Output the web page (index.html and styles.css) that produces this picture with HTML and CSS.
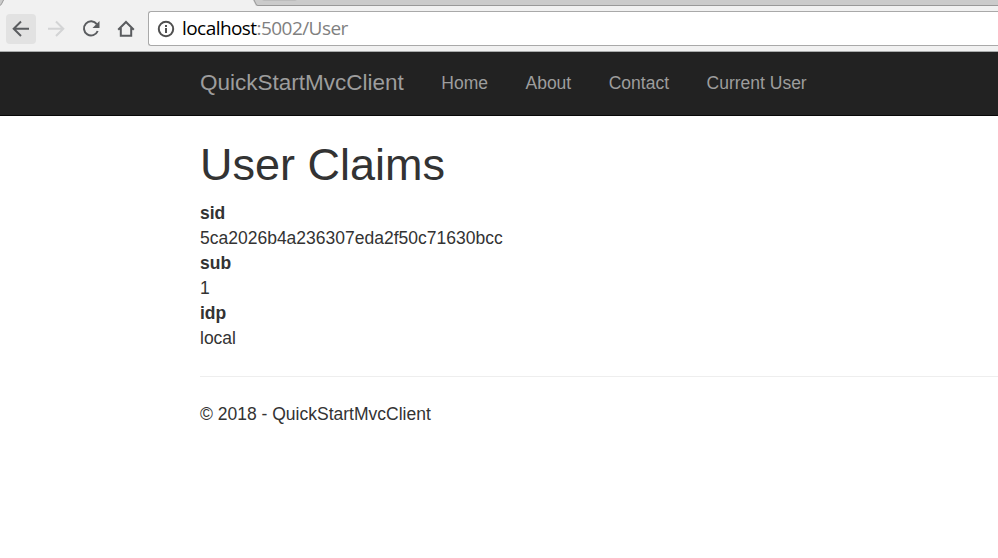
FILE: index.html
```html
<!DOCTYPE html>
<html lang="en">
<head>
<meta charset="utf-8">
<title>User Claims - QuickStartMvcClient</title>
<link rel="stylesheet" href="styles.css">
</head>
<body>
<div class="browser">
  <svg class="tabs" width="998" height="6" viewBox="0 0 998 6" aria-hidden="true">
    <path class="strip" d="M253 0H998V6H256z"/>
    <path class="strip" d="M0 0H4L0 6z"/>
    <path class="new-tab" d="M262 0H297L295 1H264z"/>
    <path class="edge" d="M253.5 -1L256 4Q256.500 5.500 258 5.500H998M4 -1L1.500 4Q1 5.500 -1 5.500"/>
  </svg>
  <div class="toolbar">
    <span class="tool active"><svg width="20" height="20" viewBox="0 0 20 20"><path d="M18 9.800H3M10 2.500L2.700 9.800L10 17"/></svg></span>
    <span class="tool disabled"><svg width="20" height="20" viewBox="0 0 20 20"><path d="M2 9.800H17M10 2.500L17.300 9.800L10 17"/></svg></span>
    <span class="tool"><svg width="20" height="20" viewBox="0 0 20 20"><path d="M15.800 5.200A7.100 7.100 0 1 0 16.700 12"/><path class="solid" d="M18.500 2V9H11.500z"/></svg></span>
    <span class="tool"><svg width="20" height="20" viewBox="0 0 20 20"><path d="M2.200 10.700L10 3L17.800 10.700M4.800 9V16.800H15.200V9"/></svg></span>
    <div class="address">
      <svg class="info" width="18" height="18" viewBox="0 0 18 18"><circle cx="9" cy="9" r="7.200"/><path d="M9 8V13M9 5V7"/></svg>
      <span class="url"><span class="host">localhost</span>:5002/User</span>
    </div>
  </div>
</div>
<nav class="navbar">
  <a class="brand">QuickStartMvcClient</a>
  <a class="link">Home</a>
  <a class="link">About</a>
  <a class="link">Contact</a>
  <a class="link">Current User</a>
</nav>
<main class="content">
  <h1>User Claims</h1>
  <dl>
    <dt>sid</dt><dd>5ca2026b4a236307eda2f50c71630bcc</dd>
    <dt>sub</dt><dd>1</dd>
    <dt>idp</dt><dd>local</dd>
  </dl>
  <hr>
  <footer>© 2018 - QuickStartMvcClient</footer>
</main>
</body>
</html>
```
FILE: styles.css
```css
* { box-sizing: border-box; }
body {
  margin: 0;
  overflow: hidden;
  background: #fff;
  color: #333;
  font: 17.5px/25px "Liberation Sans", Arial, sans-serif;
}
.browser {
  height: 52px;
  background: #f1f1f1;
  border-bottom: 1px solid #a9abab;
}
.tabs { display: block; }
.strip { fill: #cbcbcb; }
.new-tab { fill: #bcbcbc; }
.edge { fill: none; stroke: #999; }
.toolbar {
  display: flex;
  align-items: center;
  height: 45px;
  padding-left: 6px;
}
.tool {
  display: flex;
  flex: none;
  align-items: center;
  justify-content: center;
  width: 30px;
  height: 30px;
  margin-right: 5px;
  border-radius: 4px;
}
.tool.active { background: #e2e2e2; }
.tool svg, .info { fill: none; stroke: #5a5c5f; stroke-width: 2; }
.tool.disabled svg { stroke: #d3d4d5; }
.tool .solid { fill: #5a5c5f; stroke: none; }
.address {
  display: flex;
  flex: 1;
  align-items: center;
  height: 35px;
  margin-left: 2px;
  padding-left: 8px;
  border: 1px solid #a9a9a9;
  border-right: 0;
  border-radius: 3px 0 0 3px;
  background: #fff;
}
.info { stroke: #505050; }
.url {
  margin-left: 7px;
  padding-bottom: 2px;
  color: #808080;
  font: 19px/30px "Open Sans", "Noto Sans", sans-serif;
  letter-spacing: -0.56px;
}
.host { color: #000; }
.navbar {
  display: flex;
  align-items: center;
  gap: 37.5px;
  height: 64px;
  padding-left: 200px;
  background: #222;
  border-bottom: 1px solid #080808;
  color: #9d9d9d;
}
.brand { padding-bottom: 2px; font-size: 22.5px; }
.content { padding-left: 200px; }
h1 {
  margin: 0;
  padding: 24px 0 11px;
  font-size: 45px;
  font-weight: 400;
  line-height: 49.5px;
}
dl { margin: 0; }
dt { font-weight: 700; }
dd { margin: 0; }
hr {
  margin: 25.5px 0 25px;
  border: 0;
  border-top: 1px solid #eee;
}
```
